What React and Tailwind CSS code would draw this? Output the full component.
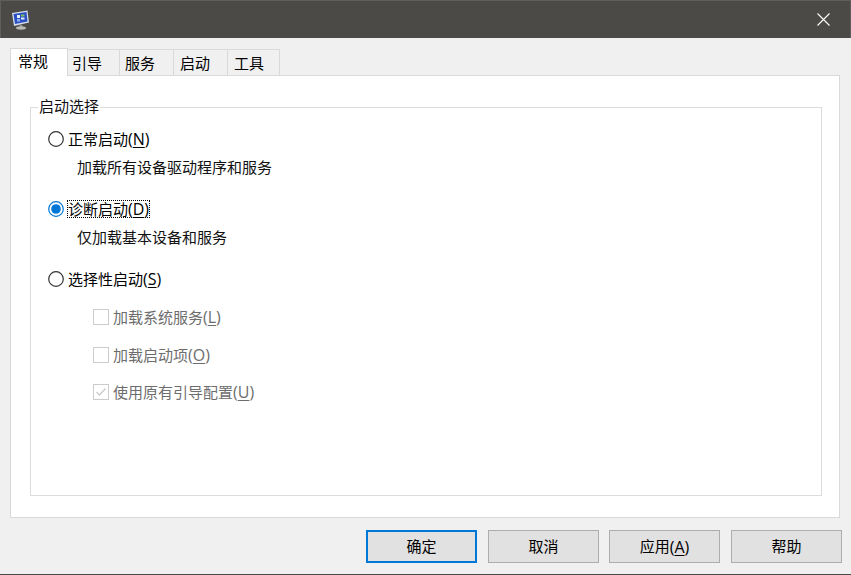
import React from "react";

const font = { fontFamily: '"Open Sans", "Noto Sans CJK SC", sans-serif' };

function Radio({ checked }) {
  return (
    <svg width="16" height="16" viewBox="0 0 16 16" className="shrink-0">
      <circle cx="8" cy="8" r="7.3" fill="#fff" stroke={checked ? "#0078d7" : "#333333"} strokeWidth="1.2" />
      {checked && <circle cx="8" cy="8" r="4.8" fill="#0078d7" />}
    </svg>
  );
}

function Check({ checked }) {
  return (
    <svg width="16" height="16" viewBox="0 0 16 16" className="shrink-0">
      <rect x="0.5" y="0.5" width="15" height="15" fill="#fff" stroke="#cccccc" />
      {checked && <path d="M3.5 8 L6.5 11 L12.5 4.5" fill="none" stroke="#cccccc" strokeWidth="1.4" />}
    </svg>
  );
}

function Tab({ label, className }) {
  return (
    <div className={"h-[26px] bg-[#f0f0f0] border-t border-r border-[#d9d9d9] flex items-center text-[15px] text-black pt-[1px] " + className}>
      {label}
    </div>
  );
}

function Button({ children, primary, className = "" }) {
  return (
    <div
      className={
        "w-[111px] h-[33px] bg-[#e1e1e1] flex items-center justify-center text-[15px] text-black " +
        (primary ? "border-2 border-[#0078d7] " : "border border-[#adadad] ") +
        className
      }
    >
      {children}
    </div>
  );
}

function Key({ k }) {
  return (
    <span className="text-[16px]">
      (<span className="underline underline-offset-2">{k}</span>)
    </span>
  );
}

function SubOption({ label, k, checked }) {
  return (
    <div className="h-[22px] flex items-center gap-[4px] text-[15px] text-[#6d6d6d]">
      <Check checked={checked} />
      <span>
        {label}
        <Key k={k} />
      </span>
    </div>
  );
}

export default function App() {
  return (
    <div style={font} className="w-[851px] h-[575px] bg-[#f0f0f0] flex flex-col border-b border-[#4b4a47] leading-none">
      <div className="h-[38px] shrink-0 bg-[#4b4a47] border-t border-l border-r border-[#5f5e5b] flex items-center justify-between pl-[10px] pr-[20px]">
        <svg width="19" height="20" viewBox="0 0 19 20">
          <path d="M1 3 L16.5 0.5 L18 12.5 L3 16 Z" fill="#d5dcea" />
          <path d="M2.5 4 L15.5 2 L16.5 11.5 L4 14 Z" fill="#2a4fc4" />
          <rect x="6" y="5" width="3" height="3" fill="#e6eef8" />
          <rect x="10" y="4.5" width="3.5" height="2" fill="#7fc06a" />
          <rect x="10" y="7.5" width="3.5" height="2" fill="#e6eef8" />
          <rect x="6" y="9" width="3" height="2.5" fill="#8fb0e8" />
          <rect x="8.5" y="15" width="3" height="2" fill="#8d8d89" />
          <ellipse cx="10" cy="18" rx="5" ry="1.7" fill="#b9b9b5" />
        </svg>
        <svg width="13" height="13" viewBox="0 0 13 13">
          <path d="M0.5 0.5 L12.5 12.5 M12.5 0.5 L0.5 12.5" stroke="#ffffff" strokeWidth="1.1" />
        </svg>
      </div>

      <div className="flex items-end h-[37px] pl-[10px] shrink-0">
        <div className="w-[58px] h-[28px] -mb-px relative z-10 bg-white border border-b-0 border-[#d9d9d9] flex items-center pl-[7px] text-[15px] text-black pb-[3px]">
          常规
        </div>
        <Tab label="引导" className="w-[52px] pl-[4px]" />
        <Tab label="服务" className="w-[54px] pl-[5px]" />
        <Tab label="启动" className="w-[54px] pl-[6px]" />
        <Tab label="工具" className="w-[52px] pl-[6px]" />
      </div>

      <div className="ml-[10px] w-[830px] h-[443px] shrink-0 bg-white border border-[#d9d9d9] pt-[23px] pl-[19px]">
        <fieldset className="w-[792px] h-[397px] border border-[#dcdcdc] pl-[17px]">
          <legend className="ml-[-10px] px-[1px] pb-[2px] text-[15px] leading-[15px] text-[#111]">启动选择</legend>

          <div className="flex items-center gap-[4px] h-[20px] mt-[13px] text-[15px] text-black">
            <Radio />
            <span>正常启动<Key k="N" /></span>
          </div>
          <div className="ml-[29px] mt-[8px] h-[20px] flex items-center text-[15px] text-[#111]">加载所有设备驱动程序和服务</div>

          <div className="flex items-center gap-[4px] h-[20px] mt-[22px] text-[15px] text-black">
            <Radio checked />
            <span className="outline-1 outline-dotted outline-black">诊断启动<Key k="D" /></span>
          </div>
          <div className="ml-[29px] mt-[8px] h-[20px] flex items-center text-[15px] text-[#111]">仅加载基本设备和服务</div>

          <div className="flex items-center gap-[4px] h-[20px] mt-[22px] text-[15px] text-black">
            <Radio />
            <span>选择性启动<Key k="S" /></span>
          </div>

          <div className="ml-[45px] mt-[17px] flex flex-col gap-[15.5px]">
            <SubOption label="加载系统服务" k="L" />
            <SubOption label="加载启动项" k="O" />
            <SubOption label="使用原有引导配置" k="U" checked />
          </div>
        </fieldset>
      </div>

      <div className="flex justify-end gap-[10px] pr-[9px] mt-[12px]">
        <Button primary>确定</Button>
        <Button className="ml-px">取消</Button>
        <Button>应用<Key k="A" /></Button>
        <Button className="ml-px">帮助</Button>
      </div>
    </div>
  );
}
